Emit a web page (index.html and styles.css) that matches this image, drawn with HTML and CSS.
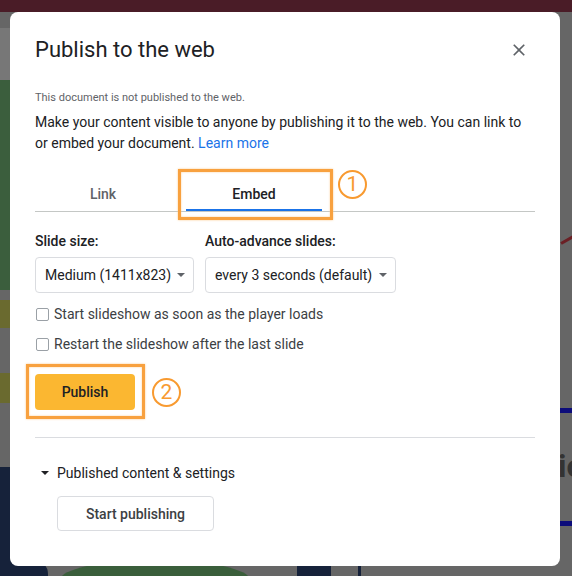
FILE: index.html
```html
<!DOCTYPE html>
<html lang="en">
<head>
  <meta charset="UTF-8" />
  <title>Publish to the web</title>
  <link rel="stylesheet" href="styles.css">
</head>
<body>
  <div class="backdrop">
    <div class="bg topbar"></div>
    <div class="bg left-gray"></div>
    <div class="bg left-green"></div>
    <div class="bg olive one"></div>
    <div class="bg olive two"></div>
    <div class="bg navy-left"></div>
    <div class="bg navy-corner"></div>
    <div class="bg green-bottom"></div>
    <div class="bg navy-bottom"></div>
    <div class="bg navy-stick"></div>
    <div class="bg blue-line one"></div>
    <div class="bg blue-line two"></div>
    <div class="bg red-stroke"></div>
    <div class="bg side-text">io</div>
  </div>

  <div class="dialog">
    <div class="dialog-head">
      <h1>Publish to the web</h1>
      <svg class="close" width="20" height="20" viewBox="0 0 24 24"><path d="M19 6.41L17.59 5 12 10.59 6.41 5 5 6.41 10.59 12 5 17.59 6.41 19 12 13.41 17.59 19 19 17.59 13.41 12z" fill="#5f6368"/></svg>
    </div>

    <p class="status">This document is not published to the web.</p>
    <p class="intro">Make your content visible to anyone by publishing it to the web. You can link to or embed your document. <a href="#">Learn more</a></p>

    <div class="tabs">
      <div class="tab">Link</div>
      <div class="tab active">
        Embed
        <span class="callout tab-callout"></span>
        <span class="step step-one">1</span>
      </div>
    </div>

    <div class="options">
      <div class="field small">
        <label>Slide size:</label>
        <div class="select"><span>Medium (1411x823)</span><span class="caret"></span></div>
      </div>
      <div class="field">
        <label>Auto-advance slides:</label>
        <div class="select"><span>every 3 seconds (default)</span><span class="caret"></span></div>
      </div>
    </div>

    <div class="check"><span class="box"></span>Start slideshow as soon as the player loads</div>
    <div class="check"><span class="box"></span>Restart the slideshow after the last slide</div>

    <div class="publish-wrap">
      <button class="publish">Publish</button>
      <span class="callout btn-callout"></span>
      <span class="step step-two">2</span>
    </div>

    <hr class="divider">

    <div class="settings"><span class="caret dark"></span>Published content &amp; settings</div>
    <button class="start">Start publishing</button>
  </div>
</body>
</html>
```

FILE: styles.css
```css
body {
  margin: 0;
  width: 572px;
  height: 576px;
  overflow: hidden;
  position: relative;
  background: #666;
  font-family: Roboto, "Liberation Sans", sans-serif;
  color: #202124;
}

/* page behind the dim overlay */
.bg { position: absolute; }
.topbar { left: 0; top: 0; width: 572px; height: 12px; background: #4a1c27; }
.left-gray { left: 0; top: 28px; width: 10px; height: 52px; background: #777; }
.left-green { left: 0; top: 80px; width: 10px; height: 210px; background: #3b5e3d; }
.olive { left: 0; width: 10px; background: #6a6a2f; }
.olive.one { top: 300px; height: 28px; }
.olive.two { top: 373px; height: 30px; }
.navy-left { left: 0; top: 467px; width: 10px; height: 109px; background: #16223a; }
.navy-corner { left: 0; top: 560px; width: 48px; height: 30px; border-radius: 0 14px 0 0; background: #16223a; }
.green-bottom { left: 60px; top: 560px; width: 190px; height: 40px; border-radius: 50%; background: #3a5e3b; }
.navy-bottom { left: 297px; top: 566px; width: 34px; height: 10px; background: #16223a; }
.navy-stick { left: 358px; top: 566px; width: 3px; height: 10px; background: #16223a; }
.blue-line { left: 560px; width: 12px; height: 5px; background: #0c0c7a; }
.blue-line.one { top: 408px; }
.blue-line.two { top: 521px; }
.red-stroke { left: 560px; top: 238px; width: 16px; height: 3px; background: #6b1f24; transform: rotate(-30deg); }
.side-text { left: 558px; top: 448px; font-size: 32px; font-weight: 700; color: #333; line-height: 36px; }

.dialog {
  position: relative;
  margin: 12px 0 0 10px;
  width: 550px;
  height: 554px;
  box-sizing: border-box;
  padding: 0 25px;
  background: #fff;
  border-radius: 8px;
}

.dialog-head {
  display: flex;
  justify-content: space-between;
  align-items: center;
  padding-top: 24px;
}
.dialog-head h1 {
  margin: 0;
  font-size: 22px;
  font-weight: 400;
  line-height: 28px;
  color: #202124;
}
.close { margin-right: 6px; }

.status {
  margin: 26px 0 0;
  font-size: 11px;
  line-height: 16px;
  color: #5f6368;
}
.intro {
  margin: 6px 0 0;
  font-size: 14px;
  line-height: 21px;
  color: #202124;
}
.intro a { color: #1a73e8; text-decoration: none; }

.tabs {
  display: flex;
  gap: 15px;
  margin-top: 22px;
  border-bottom: 1px solid #c4c7c5;
}
.tab {
  position: relative;
  width: 136px;
  height: 35px;
  line-height: 36px;
  text-align: center;
  font-size: 14px;
  font-weight: 500;
  color: #5f6368;
}
.tab.active {
  color: #202124;
  box-shadow: inset 0 -2px 0 #1a73e8;
}

.callout {
  position: absolute;
  border: 3px solid #f8a13f;
  box-shadow: 0 0 2px #fbc98c, inset 0 0 2px #fbc98c;
  pointer-events: none;
}
.tab-callout { left: -8px; right: -11px; top: -7px; bottom: -9px; }
.btn-callout { left: -9px; top: -10px; width: 113px; height: 49px; }

.step {
  position: absolute;
  box-sizing: border-box;
  width: 29px;
  height: 29px;
  border: 2.5px solid #f89a30;
  border-radius: 50%;
  color: #f89a30;
  font-size: 21px;
  line-height: 24px;
  text-align: center;
  font-weight: 400;
}
.step-one { left: 152px; top: -6px; }
.step-two { left: 117px; top: 4px; }

.options {
  display: flex;
  gap: 11px;
  margin-top: 19px;
}
.field label {
  display: block;
  font-size: 14px;
  font-weight: 500;
  line-height: 20px;
  color: #202124;
}
.select {
  display: flex;
  align-items: center;
  justify-content: space-between;
  margin-top: 6px;
  height: 36px;
  box-sizing: border-box;
  padding: 0 8px 0 9px;
  border: 1px solid #dadce0;
  border-radius: 4px;
  font-size: 14px;
  white-space: nowrap;
  color: #202124;
}
.field.small .select { width: 159px; }
.field .select { width: 191px; }
.caret {
  flex-shrink: 0;
  margin-left: 6px;
  width: 0;
  height: 0;
  border-left: 4px solid transparent;
  border-right: 4px solid transparent;
  border-top: 4px solid #5f6368;
}
.caret.dark { margin: 0 8px 0 6px; border-top-color: #202124; }

.check {
  display: flex;
  align-items: center;
  font-size: 14px;
  line-height: 20px;
  color: #3c4043;
  margin-top: 10px;
}
.options + .check { margin-top: 11px; }
.box {
  width: 11px;
  height: 11px;
  margin: 0 5px 0 1px;
  border: 1px solid #9aa0a6;
  border-radius: 2px;
}

.publish-wrap {
  position: relative;
  margin-top: 20px;
  width: 100px;
}
.publish {
  display: block;
  width: 100px;
  height: 36px;
  border: none;
  border-radius: 4px;
  background: #fbb731;
  font-family: inherit;
  font-size: 14px;
  font-weight: 500;
  color: #202124;
}

.divider {
  margin: 27px 0 0;
  border: none;
  border-top: 1px solid #dadce0;
}

.settings {
  display: flex;
  align-items: center;
  margin-top: 25px;
  font-size: 14px;
  line-height: 20px;
  color: #202124;
}

.start {
  display: block;
  margin: 13px 0 0 22px;
  width: 157px;
  height: 35px;
  border: 1px solid #dadce0;
  border-radius: 4px;
  background: #fff;
  font-family: inherit;
  font-size: 14px;
  font-weight: 500;
  color: #3c4043;
}
```
